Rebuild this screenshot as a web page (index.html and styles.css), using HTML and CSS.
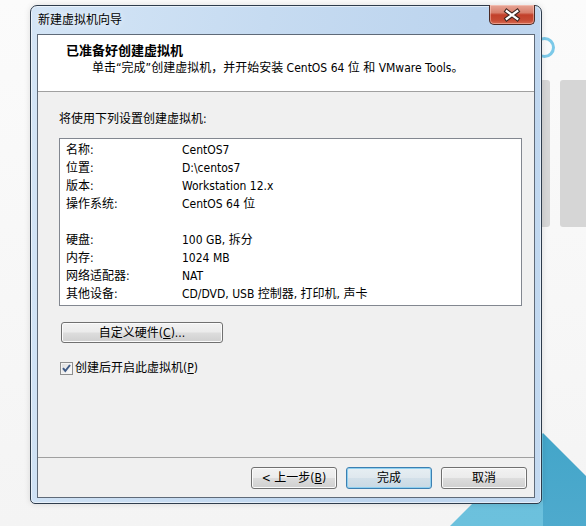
FILE: index.html
```html
<!DOCTYPE html>
<html lang="zh-CN">
<head>
<meta charset="utf-8">
<title>新建虚拟机向导</title>
<link rel="stylesheet" href="styles.css">
</head>
<body>
<div class="desktop">
  <div class="deco ring"></div>
  <div class="deco bar bar1"></div>
  <div class="deco bar bar2"></div>
  <div class="deco tri tri-left"></div>
  <div class="deco tri tri-right"></div>

  <div class="window">
    <div class="titlebar">
      <span class="title">新建虚拟机向导</span>
      <button class="close" type="button" aria-label="关闭">
        <svg width="46" height="20" viewBox="0 0 46 20">
          <path d="M17.5 6 L28.5 14 M28.5 6 L17.5 14" stroke="#3b2520" stroke-width="4.6" stroke-linecap="square" fill="none"/>
          <path d="M17.5 6 L28.5 14 M28.5 6 L17.5 14" stroke="#ffffff" stroke-width="2.4" stroke-linecap="square" fill="none"/>
        </svg>
      </button>
    </div>
    <div class="client">
      <div class="header">
        <div class="heading">已准备好创建虚拟机</div>
        <div class="subtitle">单击“完成”创建虚拟机，并开始安装 CentOS 64 位 和 VMware Tools。</div>
      </div>
      <div class="content">
        <div class="intro">将使用下列设置创建虚拟机:</div>
        <div class="summary">
          <span>名称:</span><span>CentOS7</span>
          <span>位置:</span><span>D:\centos7</span>
          <span>版本:</span><span>Workstation 12.x</span>
          <span>操作系统:</span><span>CentOS 64 位</span>
          <span>&nbsp;</span><span>&nbsp;</span>
          <span>硬盘:</span><span>100 GB, 拆分</span>
          <span>内存:</span><span>1024 MB</span>
          <span>网络适配器:</span><span>NAT</span>
          <span>其他设备:</span><span>CD/DVD, USB 控制器, 打印机, 声卡</span>
        </div>
        <button class="btn custom" type="button">自定义硬件(<u>C</u>)...</button>
        <div class="check">
          <span class="box">
            <svg width="11" height="11" viewBox="0 0 11 11">
              <path d="M2 5.2 L4.3 8 L9 2" stroke="#3f5b86" stroke-width="2" fill="none"/>
            </svg>
          </span>
          <span class="check-label">创建后开启此虚拟机(<u>P</u>)</span>
        </div>
      </div>
      <div class="footer">
        <button class="btn" type="button">&lt; 上一步(<u>B</u>)</button>
        <button class="btn default" type="button">完成</button>
        <button class="btn" type="button">取消</button>
      </div>
    </div>
  </div>
</div>
</body>
</html>
```
FILE: styles.css
```css
* { box-sizing: border-box; }

html, body {
  margin: 0;
  padding: 0;
}

body {
  width: 586px;
  height: 526px;
  overflow: hidden;
  font-family: "DejaVu Sans Condensed", "Liberation Sans", "Noto Sans CJK SC", sans-serif;
  font-size: 12px;
  color: #000;
  background: linear-gradient(180deg, #fbfbfb 0%, #f4f4f4 100%);
}

.desktop {
  position: relative;
  width: 586px;
  height: 526px;
}

.deco { position: absolute; }

.ring {
  left: 534px;
  top: 37px;
  width: 21px;
  height: 21px;
  border: 3.5px solid #7cc9e8;
  border-radius: 50%;
}

.bar {
  top: 80px;
  height: 147px;
  background: #d6d6d6;
  border-radius: 3px;
}
.bar1 { left: 520px; width: 30px; }
.bar2 { left: 560px; width: 40px; }

.tri {
  left: 0;
  top: 0;
  width: 586px;
  height: 526px;
}
.tri-left {
  background: linear-gradient(180deg, #5fb8d8 0%, #6cc1dd 100%);
  clip-path: polygon(543px 433px, 543px 526px, 450px 526px);
}
.tri-right {
  background: linear-gradient(180deg, #1f90b6 0%, #2f9dc2 50%, #4eaacd 100%);
  clip-path: polygon(543px 433px, 586px 476px, 586px 526px, 543px 526px);
}

/* window frame */
.window {
  position: absolute;
  left: 30px;
  top: 5px;
  width: 512px;
  height: 499px;
  padding: 0 6px 5px 6px;
  border: 1px solid #2e3c4c;
  border-radius: 7px 7px 5px 5px;
  background: linear-gradient(100deg, #d4e5f6 0%, #c6dbf1 40%, #bcd4ee 75%, #c4daf1 100%);
  box-shadow: inset 0 0 0 1px rgba(255, 255, 255, 0.55), 0 0 6px rgba(0, 0, 0, 0.12);
  display: flex;
  flex-direction: column;
}

.titlebar {
  height: 28px;
  padding-left: 1px;
  display: flex;
  align-items: center;
}

.title {
  line-height: 16px;
  color: #000;
  text-shadow: 0 0 6px rgba(255, 255, 255, 0.9);
}

.close {
  position: absolute;
  top: -1px;
  right: 6px;
  width: 46px;
  height: 20px;
  padding: 0;
  border: 1px solid #4b2a24;
  border-top: none;
  border-radius: 0 0 5px 5px;
  background: linear-gradient(180deg, #e7a596 0%, #d8806d 40%, #c2402a 52%, #c64b34 80%, #d86a50 100%);
  box-shadow: inset 0 0 0 1px rgba(255, 220, 210, 0.45);
  display: flex;
  align-items: center;
  justify-content: center;
}
.close svg { display: block; }

.client {
  flex: 1;
  border: 1px solid #5f6a78;
  background: #f0f0f0;
  display: flex;
  flex-direction: column;
}

.header {
  height: 57px;
  background: #fff;
  border-bottom: 1px solid #a0a0a0;
  padding-top: 8px;
}

.heading {
  padding-left: 28px;
  font-size: 13px;
  font-weight: bold;
  line-height: 16px;
}

.subtitle {
  margin-top: 1px;
  padding-left: 54px;
  line-height: 16px;
}

.content {
  flex: 1;
  padding: 19px 12px 0 21px;
  display: flex;
  flex-direction: column;
  align-items: flex-start;
}

.intro { line-height: 16px; }

.summary {
  margin-top: 11px;
  align-self: stretch;
  height: 168px;
  border: 1px solid #828790;
  background: #fff;
  padding: 2px 0 2px 6px;
  display: grid;
  grid-template-columns: 116px 1fr;
  grid-auto-rows: 18px;
  line-height: 18px;
  white-space: nowrap;
}

.btn {
  font-family: inherit;
  font-size: 12px;
  color: #000;
  height: 22px;
  width: 86px;
  padding: 0;
  border: 1px solid #707070;
  border-radius: 3px;
  background: linear-gradient(180deg, #f2f2f2 0%, #ebebeb 49%, #dddddd 51%, #cfcfcf 100%);
  box-shadow: inset 0 0 0 1px #fbfbfb;
  line-height: 18px;
}

.btn u { text-underline-offset: 1px; }

.custom {
  margin-top: 16px;
  margin-left: 2px;
  width: 162px;
  height: 21px;
}

.btn.default {
  border-color: #3c7fb1;
  background: linear-gradient(180deg, #e6eef3 0%, #dfe8ee 49%, #d3e0e9 51%, #c9d9e4 100%);
  box-shadow: inset 0 0 0 1px #8fd0f0;
}

.check {
  margin-top: 18px;
  margin-left: 1px;
  height: 14px;
  display: flex;
  align-items: center;
  gap: 2px;
  line-height: 14px;
}

.box {
  width: 13px;
  height: 13px;
  border: 1px solid #8e8f8f;
  background: linear-gradient(135deg, #dcdcdc 0%, #f0f0f0 60%, #ffffff 100%);
  box-shadow: inset 0 0 0 1px #f4f4f4;
  display: flex;
  align-items: center;
  justify-content: center;
}
.box svg { display: block; }

.footer {
  height: 40px;
  border-top: 1px solid #a0a0a0;
  padding: 9px 7px 0 0;
  display: flex;
  justify-content: flex-end;
  align-items: flex-start;
  gap: 9px;
}
```
